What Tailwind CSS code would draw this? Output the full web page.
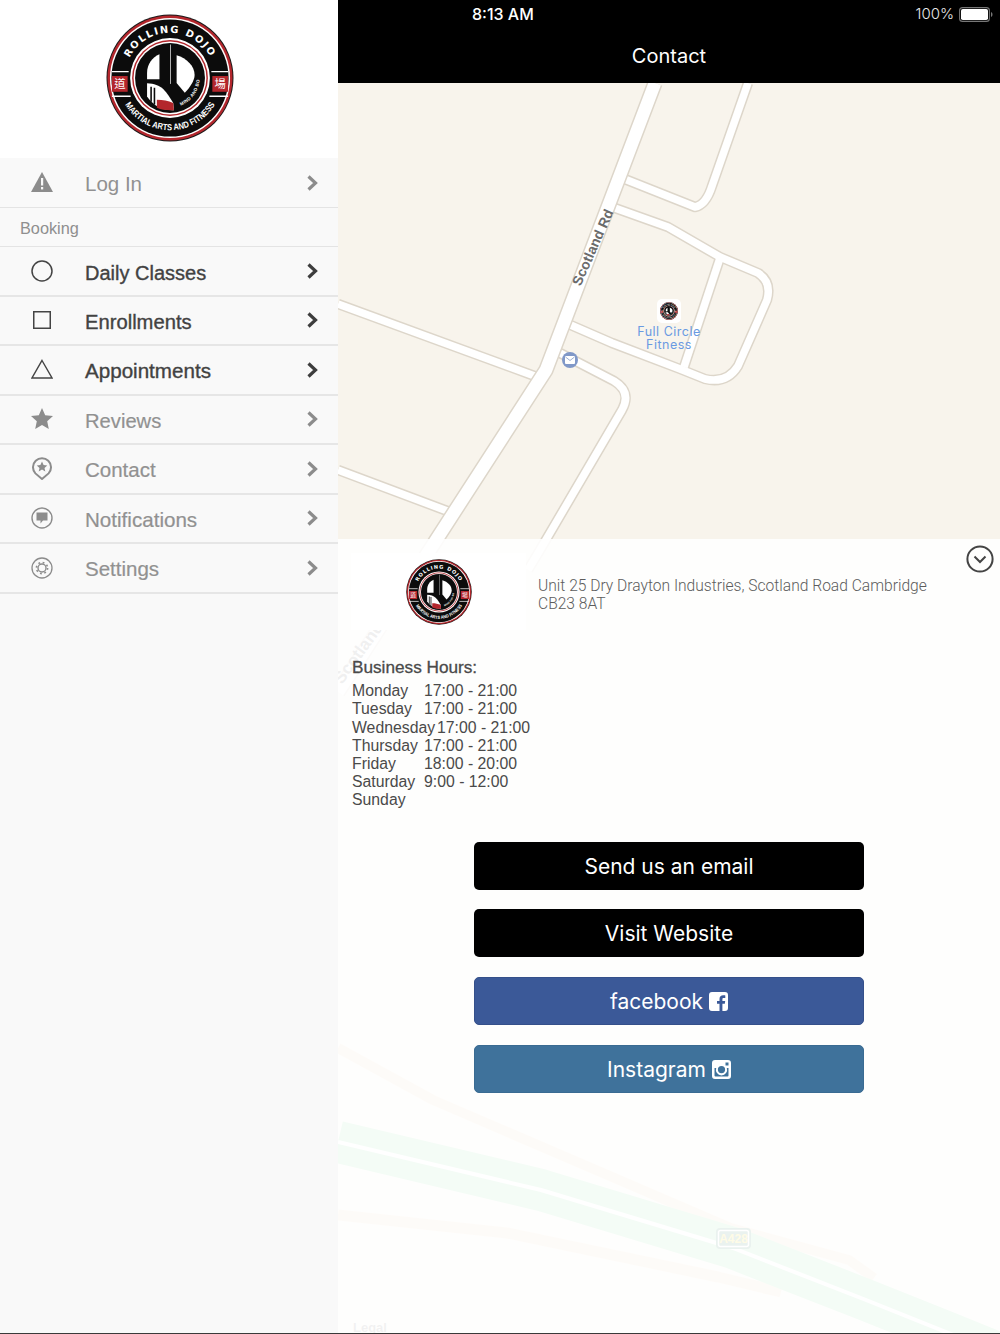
<!DOCTYPE html>
<html lang="en">
<head>
  <meta charset="UTF-8" />
  <meta name="viewport" content="width=device-width, initial-scale=1.0"/>
  <title>Contact</title>
  <script src="https://cdn.jsdelivr.net/npm/@tailwindcss/browser@4"></script>
</head>
<body class="bg-white font-['Liberation_Sans',sans-serif]">

  <!-- Logo used in the sidebar, the map pin and the contact panel -->
  <svg class="hidden" width="0" height="0">
    <defs>
      <path id="arcTop" d="M19 65 A46 46 0 0 1 111 65" />
      <path id="arcBottom" d="M12 65 A53 53 0 0 0 118 65" />
      <path id="arcMind" d="M76 93 A30 30 0 0 0 95 65" />
      <symbol id="dojoLogo" viewBox="0 0 130 130">
        <circle cx="65" cy="65" r="64.5" fill="#1a1a1a" />
        <circle cx="65" cy="65" r="63.5" fill="#b3262c" />
        <circle cx="65" cy="65" r="61" fill="#fff" />
        <circle cx="65" cy="65" r="59.5" fill="#0c0c0c" />
        <!-- side banners -->
        <path d="M6 58.5 H23 M107 58.5 H124 M6 83.5 H25 M105 83.5 H124" stroke="#fff" stroke-width="1.4" />
        <rect x="6" y="63" width="16" height="16" fill="#b3262c" />
        <rect x="108" y="63" width="16" height="16" fill="#b3262c" />
        <text x="14" y="75" text-anchor="middle" font-size="11.5" fill="#fff" font-family="'Noto Sans CJK TC',sans-serif">道</text>
        <text x="116" y="75" text-anchor="middle" font-size="11.5" fill="#fff" font-family="'Noto Sans CJK TC',sans-serif">場</text>
        <!-- inner rings -->
        <circle cx="65" cy="65" r="40.5" fill="#fff" />
        <circle cx="65" cy="65" r="38.5" fill="#b3262c" />
        <circle cx="65" cy="65" r="37" fill="#fff" />
        <circle cx="65" cy="65" r="35.5" fill="#0c0c0c" />
        <!-- RD monogram -->
        <path d="M54.3 41 V66.3 H41.7 V60 C41.7 51 47 44 54.3 41 Z" fill="#fff" />
        <path d="M41.7 70.3 C49 70.5 54 72.5 58.3 76.3 C62 80 65.5 85.5 68.3 90.3 L69 97.7 C58 98 49 94 41.7 83.7 Z" fill="#fff" />
        <path d="M51.7 87 C58 87 63 88 68.3 90.3 L69 97.7 C62 98 56.5 97.5 51.7 95.3 Z" fill="#b3262c" />
        <path d="M45 74 H46.6 V89 H45 Z M48.4 75 H50 V92 H48.4 Z" fill="#0c0c0c" />
        <rect x="65" y="31" width=".8" height="40" fill="#ddd" />
        <path d="M71.7 42 C82 45 90 53 90 62 C90 67 86 74 80 80 L71.7 70 Z" fill="#fff" />
        <text font-size="4.6" font-weight="700" fill="#fff" font-family="'Liberation Sans',sans-serif" letter-spacing=".3"><textPath href="#arcMind">MIND AND BODY</textPath></text>
        <!-- ring text -->
        <text font-size="10" font-weight="700" fill="#fff" font-family="'DejaVu Sans',sans-serif" letter-spacing="1.7" text-anchor="middle"><textPath href="#arcTop" startOffset="50%">ROLLING DOJO</textPath></text>
        <text font-size="9" font-weight="700" fill="#fff" font-family="'Liberation Sans',sans-serif" text-anchor="middle"><textPath href="#arcBottom" startOffset="50%" textLength="110" lengthAdjust="spacingAndGlyphs">MARTIAL ARTS AND FITNESS</textPath></text>
      </symbol>
    </defs>
  </svg>

  <div class="flex w-[1000px] h-[1333px] overflow-hidden">

    <!-- Sidebar -->
    <aside class="w-[338px] shrink-0 bg-[#f9f9f9] flex flex-col">
      <div class="h-[158px] bg-white flex items-center justify-center">
        <svg class="w-[128px] h-[130px] ml-[2px] mb-[2px]"><use href="#dojoLogo" /></svg>
      </div>

      <a class="h-[50px] flex items-center border-b border-[#e4e4e4] text-[#919191]">
        <span class="w-[85px] flex justify-center pr-[1px]">
          <svg class="w-[22px] h-[20px] -mt-[2px]" viewBox="0 0 22 20"><path d="M11 0 L22 20 H0 Z" fill="#8c8c8c"/><rect x="10" y="6" width="2.2" height="7.5" fill="#f9f9f9"/><rect x="10" y="15" width="2.2" height="2.4" fill="#f9f9f9"/></svg>
        </span>
        <span class="flex-1 text-[20.5px] pt-[4px]">Log In</span>
        <svg class="w-[12px] h-[16px] mr-[20px]" viewBox="0 0 12 16"><path d="M2.5 1.5 L9.5 8 L2.5 14.5" fill="none" stroke="#8c8c8c" stroke-width="3.2"/></svg>
      </a>

      <div class="h-[39px] flex items-center pl-[20px] pt-[2px] border-b border-[#e4e4e4] text-[#8f8f8f] text-[16.3px]">Booking</div>

      <a class="h-[49.5px] flex items-center border-b-2 border-[#e6e6e6] text-[#424242]">
        <span class="w-[85px] flex justify-center pr-[1px]">
          <svg class="w-[22px] h-[22px]" viewBox="0 0 22 22"><circle cx="11" cy="11" r="10" fill="none" stroke="#444" stroke-width="1.5"/></svg>
        </span>
        <span class="flex-1 text-[20px] pt-[4px] [-webkit-text-stroke:0.35px]">Daily Classes</span>
        <svg class="w-[12px] h-[16px] mr-[20px]" viewBox="0 0 12 16"><path d="M2.5 1.5 L9.5 8 L2.5 14.5" fill="none" stroke="#3d3d3d" stroke-width="3.2"/></svg>
      </a>
      <a class="h-[49.5px] flex items-center border-b-2 border-[#e6e6e6] text-[#424242]">
        <span class="w-[85px] flex justify-center pr-[1px]">
          <svg class="w-[18px] h-[18px]" viewBox="0 0 18 18"><rect x=".75" y=".75" width="16.5" height="16.5" fill="none" stroke="#444" stroke-width="1.5"/></svg>
        </span>
        <span class="flex-1 text-[20.2px] pt-[4px] [-webkit-text-stroke:0.35px]">Enrollments</span>
        <svg class="w-[12px] h-[16px] mr-[20px]" viewBox="0 0 12 16"><path d="M2.5 1.5 L9.5 8 L2.5 14.5" fill="none" stroke="#3d3d3d" stroke-width="3.2"/></svg>
      </a>
      <a class="h-[49.5px] flex items-center border-b-2 border-[#e6e6e6] text-[#424242]">
        <span class="w-[85px] flex justify-center pr-[1px]">
          <svg class="w-[22px] h-[20px] -mt-[2px]" viewBox="0 0 22 20"><path d="M11 1.5 L21 19 H1 Z" fill="none" stroke="#444" stroke-width="1.4"/></svg>
        </span>
        <span class="flex-1 text-[20.6px] pt-[4px] [-webkit-text-stroke:0.35px]">Appointments</span>
        <svg class="w-[12px] h-[16px] mr-[20px]" viewBox="0 0 12 16"><path d="M2.5 1.5 L9.5 8 L2.5 14.5" fill="none" stroke="#3d3d3d" stroke-width="3.2"/></svg>
      </a>
      <a class="h-[49.5px] flex items-center border-b-2 border-[#e6e6e6] text-[#919191]">
        <span class="w-[85px] flex justify-center pr-[1px]">
          <svg class="w-[22px] h-[21px] -mt-[2px]" viewBox="0 0 22 21"><path d="M11 0 L14.2 7.2 L22 8 L16.2 13.2 L17.8 21 L11 17 L4.2 21 L5.8 13.2 L0 8 L7.8 7.2 Z" fill="#8c8c8c"/></svg>
        </span>
        <span class="flex-1 text-[20.2px] pt-[4px] [-webkit-text-stroke:0.2px]">Reviews</span>
        <svg class="w-[12px] h-[16px] mr-[20px]" viewBox="0 0 12 16"><path d="M2.5 1.5 L9.5 8 L2.5 14.5" fill="none" stroke="#8c8c8c" stroke-width="3.2"/></svg>
      </a>
      <a class="h-[49.5px] flex items-center border-b-2 border-[#e6e6e6] text-[#919191]">
        <span class="w-[85px] flex justify-center pr-[1px]">
          <svg class="w-[20px] h-[23px]" viewBox="0 0 20 23"><path d="M10 22 L3.4 16.4 A9 9 0 1 1 16.6 16.4 Z" fill="none" stroke="#8c8c8c" stroke-width="2"/><path d="M10 4.5 L11.6 8 L15.3 8.4 L12.5 10.9 L13.3 14.5 L10 12.6 L6.7 14.5 L7.5 10.9 L4.7 8.4 L8.4 8 Z" fill="#8c8c8c"/></svg>
        </span>
        <span class="flex-1 text-[20.5px] pt-[4px] [-webkit-text-stroke:0.2px]">Contact</span>
        <svg class="w-[12px] h-[16px] mr-[20px]" viewBox="0 0 12 16"><path d="M2.5 1.5 L9.5 8 L2.5 14.5" fill="none" stroke="#8c8c8c" stroke-width="3.2"/></svg>
      </a>
      <a class="h-[49.5px] flex items-center border-b-2 border-[#e6e6e6] text-[#919191]">
        <span class="w-[85px] flex justify-center pr-[1px]">
          <svg class="w-[22px] h-[22px]" viewBox="0 0 22 22"><circle cx="11" cy="11" r="10" fill="none" stroke="#8c8c8c" stroke-width="1.4"/><path d="M5.5 5.5 H16.5 V13.5 H12 L9.5 16.5 V13.5 H5.5 Z" fill="#8c8c8c"/></svg>
        </span>
        <span class="flex-1 text-[20.6px] pt-[4px] [-webkit-text-stroke:0.2px]">Notifications</span>
        <svg class="w-[12px] h-[16px] mr-[20px]" viewBox="0 0 12 16"><path d="M2.5 1.5 L9.5 8 L2.5 14.5" fill="none" stroke="#8c8c8c" stroke-width="3.2"/></svg>
      </a>
      <a class="h-[49.5px] flex items-center border-b-2 border-[#e6e6e6] text-[#919191]">
        <span class="w-[85px] flex justify-center pr-[1px]">
          <svg class="w-[22px] h-[22px]" viewBox="0 0 22 22"><circle cx="11" cy="11" r="10" fill="none" stroke="#8c8c8c" stroke-width="1.3"/><circle cx="11" cy="11" r="4" fill="none" stroke="#8c8c8c" stroke-width="1.4"/><circle cx="11" cy="11" r="5.6" fill="none" stroke="#8c8c8c" stroke-width="1.6" stroke-dasharray="1.8 2.6"/></svg>
        </span>
        <span class="flex-1 text-[20.5px] pt-[4px] [-webkit-text-stroke:0.2px]">Settings</span>
        <svg class="w-[12px] h-[16px] mr-[20px]" viewBox="0 0 12 16"><path d="M2.5 1.5 L9.5 8 L2.5 14.5" fill="none" stroke="#8c8c8c" stroke-width="3.2"/></svg>
      </a>
    </aside>

    <!-- Main column -->
    <main class="flex-1 flex flex-col min-w-0">
      <header class="h-[83px] shrink-0 bg-black text-white">
        <div class="h-[28px] flex items-center pl-[134px] pr-[7px]">
          <span class="text-[16px] font-medium font-['Inter',sans-serif]">8:13 AM</span>
          <span class="ml-auto text-[15px] text-[#e8e8e8] font-['Inter',sans-serif] font-light">100%</span>
          <svg class="ml-[5px] w-[34px] h-[15px]" viewBox="0 0 34 15"><rect x=".6" y=".6" width="29.8" height="13.8" rx="3" fill="none" stroke="#777" stroke-width="1.1"/><rect x="2" y="2" width="27" height="11" rx="1.8" fill="#fff"/><path d="M32 5 C33 5.4 33.5 6.3 33.5 7.5 C33.5 8.7 33 9.6 32 10 Z" fill="#777"/></svg>
        </div>
        <h1 class="h-[55px] flex items-center justify-center text-[20px] font-['Inter',sans-serif]">Contact</h1>
      </header>

      <div class="relative flex-1 bg-[#f8f4ec]">
        <!-- Map roads, in page coordinates -->
        <svg class="absolute inset-0 w-[662px] h-[1250px]" viewBox="338 83 662 1250">
          <g fill="none" stroke-linejoin="round">
            <g stroke="#ddd6ca" stroke-width="10.5">
              <path d="M338 304 L540 378" />
              <path d="M338 470 L450 512" />
              <path d="M748 83 L712 186 Q706 205 695 207 L622 178" />
              <path d="M612 207 L668 227 L720 257 L758 273 Q772 282 767 300 L738 366 Q727 384 705 379 L680 369 L612 343 L566 323" />
              <path d="M720 258 L684 367" />
              <path d="M560 353 L614 381 Q632 392 622 410 L540 550 L528 570" />
            </g>
            <g stroke="#fff" stroke-width="7.5">
              <path d="M338 304 L540 378" />
              <path d="M338 470 L450 512" />
              <path d="M748 83 L712 186 Q706 205 695 207 L622 178" />
              <path d="M612 207 L668 227 L720 257 L758 273 Q772 282 767 300 L738 366 Q727 384 705 379 L680 369 L612 343 L566 323" />
              <path d="M720 258 L684 367" />
              <path d="M560 353 L614 381 Q632 392 622 410 L540 550 L528 570" />
            </g>
            <path d="M655 83 L546 370 L338 692" stroke="#ddd6ca" stroke-width="15.5" />
            <path d="M655 83 L546 370 L338 692" stroke="#fff" stroke-width="12.5" />
            <!-- motorway and slip roads, seen through the panel -->
            <path d="M338 1048 L433 1100 L731 1228 L849 1260 L874 1278" stroke="#efdabb" stroke-width="10" />
            <path d="M338 1215 L507 1233 L718 1277 L781 1292" stroke="#efdabb" stroke-width="11" />
            <path d="M338 1142 L541 1190 L733 1248 L866 1300 L946 1332 L1000 1354" stroke="#91e1a5" stroke-width="42" />
            <path d="M338 1142 L541 1190 L733 1248 L866 1300 L946 1332 L1000 1354" stroke="#fff" stroke-width="4" />
          </g>
          <rect x="716" y="1228" width="35" height="21" rx="4" fill="#2f7a5c" />
          <rect x="718.5" y="1230.5" width="30" height="16" rx="2" fill="none" stroke="#fff" stroke-width="1.5" />
          <text x="733.5" y="1243" text-anchor="middle" font-size="12" font-weight="700" fill="#f5d300" font-family="'Liberation Sans',sans-serif">A428</text>
          <text x="353" y="1332" font-size="13" font-weight="700" fill="#777" font-family="'Liberation Sans',sans-serif">Legal</text>
          <text transform="translate(363 656) rotate(-54)" text-anchor="middle" font-size="17" font-weight="700" fill="#666" font-family="'Liberation Sans',sans-serif">Scotland</text>
        </svg>

        <!-- Map pins and labels -->
        <span class="absolute left-[255px] top-[154px] w-[0px] whitespace-nowrap -rotate-[66deg] flex justify-center text-[#6b6b6b] text-[14px] font-bold">Scotland Rd</span>
        <span class="absolute left-[224px] top-[269px] w-[16px] h-[16px] rounded-full bg-[#8098c8] flex items-center justify-center">
          <svg class="w-[10px] h-[8px]" viewBox="0 0 10 8"><rect width="10" height="8" rx="1" fill="#fff"/><path d="M0.5 1 L5 4.5 L9.5 1" fill="none" stroke="#8098c8" stroke-width=".8"/></svg>
        </span>
        <span class="absolute left-[319px] top-[216px] w-[24px] h-[24px] rounded-[5px] bg-white flex items-center justify-center">
          <svg class="w-[18px] h-[18px]"><use href="#dojoLogo" /></svg>
        </span>
        <div class="absolute left-[281px] top-[242px] w-[100px] text-center text-[#6a9ae2] text-[12.5px] leading-[13px] tracking-[0.5px] font-['Inter',sans-serif]">Full Circle<br />Fitness</div>

        <!-- Contact panel over the map -->
        <section class="absolute left-0 right-0 top-[456px] bottom-0 bg-white/90">
          <svg class="absolute right-[6px] top-[6px] w-[28px] h-[28px]" viewBox="0 0 28 28"><circle cx="14" cy="14" r="12.6" fill="none" stroke="#444" stroke-width="2"/><path d="M8.5 11.5 L14 17 L19.5 11.5" fill="none" stroke="#444" stroke-width="2"/></svg>

          <div class="flex">
            <div class="ml-[13px] mt-[14px] w-[175px] h-[77px] bg-white flex items-center justify-center">
              <svg class="w-[66px] h-[66px]"><use href="#dojoLogo" /></svg>
            </div>
            <p class="ml-[12px] mt-[38px] w-[420px] text-[15.6px] leading-[18px] text-[#5c5c5c] font-light font-['Roboto',sans-serif]">Unit 25 Dry Drayton Industries, Scotland Road Cambridge CB23 8AT</p>
          </div>

          <div class="ml-[14px] mt-[28px] text-[15.8px] leading-[18.2px] text-[#4a4a4a]">
            <h2 class="text-[17.2px] [-webkit-text-stroke:0.3px] mb-[6px]">Business Hours:</h2>
            <div class="flex"><span class="w-[72px]">Monday</span><span>17:00 - 21:00</span></div>
            <div class="flex"><span class="w-[72px]">Tuesday</span><span>17:00 - 21:00</span></div>
            <div class="flex"><span class="w-[85px]">Wednesday</span><span>17:00 - 21:00</span></div>
            <div class="flex"><span class="w-[72px]">Thursday</span><span>17:00 - 21:00</span></div>
            <div class="flex"><span class="w-[72px]">Friday</span><span>18:00 - 20:00</span></div>
            <div class="flex"><span class="w-[72px]">Saturday</span><span>9:00 - 12:00</span></div>
            <div>Sunday</div>
          </div>

          <div class="mt-[32px] ml-[136px] w-[390px] flex flex-col gap-[20px] font-['Inter',sans-serif] text-white text-[21px]">
            <a class="h-[48px] pt-[2px] rounded-[5px] bg-black flex items-center justify-center">Send us an email</a>
            <a class="h-[48px] pt-[2px] -mt-[1px] rounded-[5px] bg-black flex items-center justify-center">Visit Website</a>
            <a class="h-[48px] pt-[2px] rounded-[5px] bg-[#3b5998] border border-[#35508a] flex items-center justify-center gap-[6px]">facebook
              <svg class="w-[19px] h-[19px]" viewBox="0 0 19 19"><path d="M3 0 H16 A3 3 0 0 1 19 3 V16 A3 3 0 0 1 16 19 H13.4 V11.8 H15.8 L16.2 9 H13.4 V7.2 C13.4 6.4 13.7 5.9 14.8 5.9 H16.3 V3.4 C16 3.3 15.1 3.3 14.1 3.3 C12 3.3 10.5 4.6 10.5 6.9 V9 H8 V11.8 H10.5 V19 H3 A3 3 0 0 1 0 16 V3 A3 3 0 0 1 3 0 Z" fill="#fff"/></svg>
            </a>
            <a class="h-[48px] pt-[2px] rounded-[5px] bg-[#3f729b] border border-[#3a6b92] flex items-center justify-center gap-[6px]">Instagram
              <svg class="w-[19px] h-[19px]" viewBox="0 0 19 19"><path fill-rule="evenodd" d="M3 0 H16 A3 3 0 0 1 19 3 V16 A3 3 0 0 1 16 19 H3 A3 3 0 0 1 0 16 V3 A3 3 0 0 1 3 0 Z M13.5 2.5 V5.5 H16.5 V2.5 Z M2.5 8 V15.5 A1 1 0 0 0 3.5 16.5 H15.5 A1 1 0 0 0 16.5 15.5 V8 H14.8 A5.6 5.6 0 1 1 4.2 8 Z M9.5 6 A3.6 3.6 0 1 0 9.5 13.2 A3.6 3.6 0 1 0 9.5 6 Z" fill="#fff"/></svg>
            </a>
          </div>
        </section>
      </div>
    </main>
  </div>
  <div class="h-[1px] bg-[#3a3a3a]"></div>
</body>
</html>
